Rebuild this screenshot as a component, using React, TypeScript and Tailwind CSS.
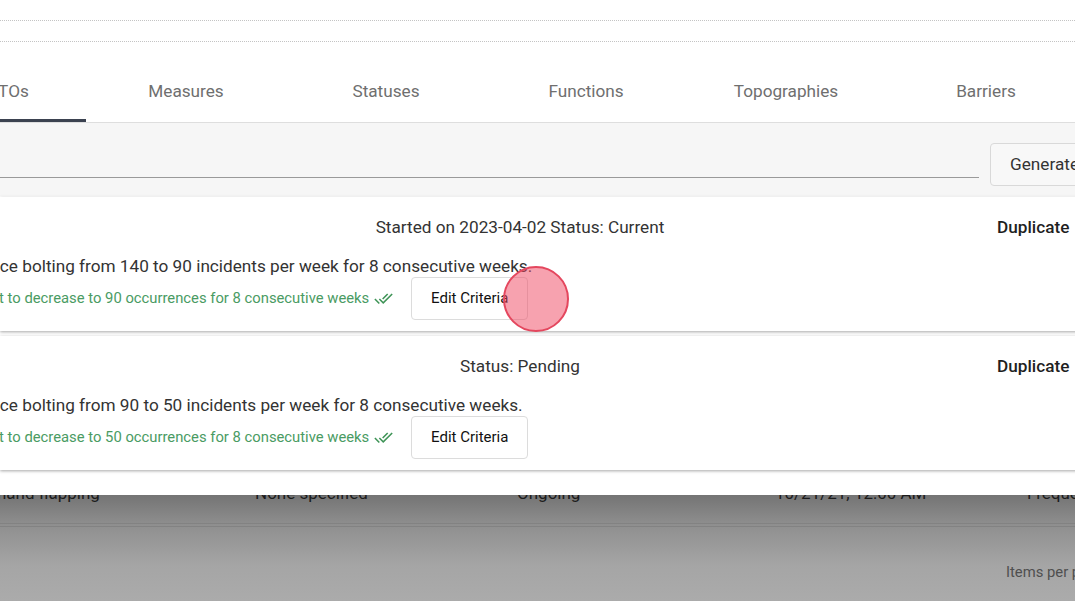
import { MdDoneAll } from "react-icons/md";

const tabs = ["LTOs/STOs", "Measures", "Statuses", "Functions", "Topographies", "Barriers"];

const goals = [
  {
    title: "Started on 2023-04-02 Status: Current",
    goal: "Reduce bolting from 140 to 90 incidents per week for 8 consecutive weeks.",
    criteria: "Target to decrease to 90 occurrences for 8 consecutive weeks",
  },
  {
    title: "Status: Pending",
    goal: "Reduce bolting from 90 to 50 incidents per week for 8 consecutive weeks.",
    criteria: "Target to decrease to 50 occurrences for 8 consecutive weeks",
  },
];

function GoalCard({ title, goal, criteria }: { title: string; goal: string; criteria: string }) {
  return (
    <div className="w-[1200px] bg-white pt-[18px] pb-[11px] shadow-[0_1px_3px_rgba(0,0,0,0.35)]">
      <div className="flex h-6 items-center text-[17.2px] leading-6">
        <p className="ml-[43px] w-[954px] text-center text-[#333]">{title}</p>
        <button className="whitespace-nowrap font-medium text-[#1f1f1f]">Duplicate</button>
      </div>
      <p className="-ml-[39px] mt-[17px] whitespace-nowrap text-[17.2px] leading-[21px] text-[#333]">{goal}</p>
      <div className="-ml-[38px] flex h-[43px] items-center">
        <span className="whitespace-nowrap text-[14.8px] text-[#4a9b63]">{criteria}</span>
        <MdDoneAll className="ml-[5px] shrink-0 text-[#3f9457]" size={19} />
        <button className="ml-[18px] h-[43px] w-[117px] shrink-0 rounded border border-[#dcdcdc] bg-white text-[15px] text-[#111]">
          Edit Criteria
        </button>
      </div>
    </div>
  );
}

export default function App() {
  return (
    <div className="relative h-[601px] w-[1075px] overflow-hidden bg-white font-['Roboto',sans-serif]">
      {/* modal */}
      <div className="relative z-10 h-[495px] bg-white">
        <div className="h-[21px] border-b border-dotted border-[#c4c4c4]" />
        <div className="h-[21px] border-b border-dotted border-[#c4c4c4]" />

        {/* Tabs */}
        <div className="mt-[20px] border-b border-[#dedede]">
          <div className="-ml-[114px] flex">
            {tabs.map((t, i) => (
              <div
                key={t}
                className={
                  i === 0
                    ? "flex h-[60px] w-[200px] shrink-0 items-center justify-center whitespace-nowrap border-b-[3px] border-[#3b4250] pt-[3px] text-[17.2px] text-[#6f6f6f]"
                    : "flex h-[60px] w-[200px] shrink-0 items-center justify-center whitespace-nowrap border-b-[3px] border-transparent pt-[3px] text-[17.2px] text-[#6f6f6f]"
                }
              >
                {t}
              </div>
            ))}
          </div>
        </div>

        {/* Toolbar */}
        <div className="flex gap-[11px] bg-[#f6f6f6] pt-[20px] pb-[10px]">
          <div className="h-[35px] w-[979px] shrink-0 border-b border-[#9a9a9a]" />
          <button className="h-[43px] shrink-0 whitespace-nowrap rounded border border-[#d9d9d9] bg-[#f8f8f8] px-[19px] text-[17.2px] text-[#333]">
            Generate Report
          </button>
        </div>

        {/* Goals */}
        <div className="mt-px flex flex-col gap-[5px]">
          {goals.map((g) => (
            <GoalCard key={g.title} {...g} />
          ))}
        </div>
      </div>

      {/* backdrop over the page table */}
      <div className="flex h-[106px] flex-col bg-[linear-gradient(to_bottom,#747474_0px,#8f8f8f_30px,#a5a5a5_70px,#ababab_106px)]">
        <div className="-ml-[3px] -mt-[14px] flex h-6 whitespace-nowrap text-[17px] leading-6 text-[#1c1c1c]">
          <span className="w-[258px] shrink-0">hand flapping</span>
          <span className="w-[262px] shrink-0">None specified</span>
          <span className="w-[258px] shrink-0">Ongoing</span>
          <span className="w-[252px] shrink-0">10/21/21, 12:00 AM</span>
          <span className="shrink-0">Frequency</span>
        </div>
        <div className="mt-[18px] h-[4px] shrink-0 border-y border-[#828282]" />
        <p className="ml-[1006px] mt-[35px] whitespace-nowrap text-[14.8px] leading-5 text-[#4f4f4f]">Items per page:</p>
      </div>

      {/* click marker */}
      <div className="absolute left-[503px] top-[266px] z-20 h-[66px] w-[66px] rounded-full border-2 border-[#e4475e] bg-[rgba(240,70,95,0.5)]" />
    </div>
  );
}
